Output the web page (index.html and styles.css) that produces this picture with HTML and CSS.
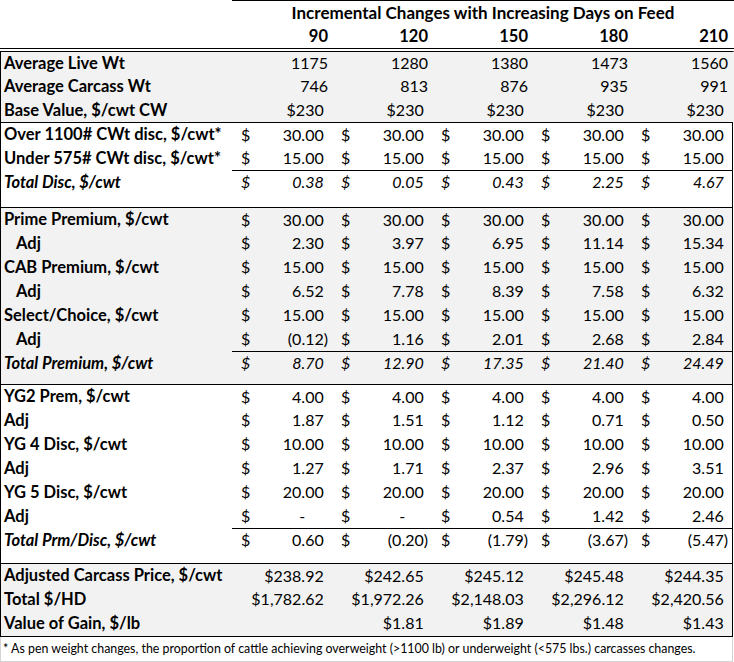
FILE: index.html
```html
<!DOCTYPE html>
<html lang="en">
<head>
<meta charset="utf-8">
<title>Incremental Changes with Increasing Days on Feed</title>
<link rel="stylesheet" href="styles.css">
</head>
<body>
<div class="sheet">
  <div class="head">
    <div class="title">Incremental Changes with Increasing Days on Feed</div>
    <div class="cols"><span>90</span><span>120</span><span>150</span><span>180</span><span>210</span></div>
  </div>
  <div class="body">
    <section class="sec s1 gray">
      <div class="row"><div class="lbl">Average Live Wt</div><span class="num wide">1175</span><span class="num wide">1280</span><span class="num wide">1380</span><span class="num wide">1473</span><span class="num wide">1560</span></div>
      <div class="row"><div class="lbl">Average Carcass Wt</div><span class="num wide">746</span><span class="num wide">813</span><span class="num wide">876</span><span class="num wide">935</span><span class="num wide">991</span></div>
      <div class="row"><div class="lbl">Base Value, $/cwt CW</div><span class="num wide p">$230</span><span class="num wide p">$230</span><span class="num wide p">$230</span><span class="num wide p">$230</span><span class="num wide p">$230</span></div>
    </section>
    <section class="sec">
      <div class="row"><div class="lbl">Over 1100# CWt disc, $/cwt*</div><span class="cur">$</span><span class="num p">30.00</span><span class="cur">$</span><span class="num p">30.00</span><span class="cur">$</span><span class="num p">30.00</span><span class="cur">$</span><span class="num p">30.00</span><span class="cur">$</span><span class="num p">30.00</span></div>
      <div class="row"><div class="lbl">Under 575# CWt disc, $/cwt*</div><span class="cur">$</span><span class="num p">15.00</span><span class="cur">$</span><span class="num p">15.00</span><span class="cur">$</span><span class="num p">15.00</span><span class="cur">$</span><span class="num p">15.00</span><span class="cur">$</span><span class="num p">15.00</span></div>
      <div class="row total it"><div class="lbl">Total Disc, $/cwt</div><span class="cur">$</span><span class="num p">0.38</span><span class="cur">$</span><span class="num p">0.05</span><span class="cur">$</span><span class="num p">0.43</span><span class="cur">$</span><span class="num p">2.25</span><span class="cur">$</span><span class="num p">4.67</span></div>
      <div class="spacer sp2"></div>
    </section>
    <section class="sec gray">
      <div class="row"><div class="lbl">Prime Premium, $/cwt</div><span class="cur">$</span><span class="num p">30.00</span><span class="cur">$</span><span class="num p">30.00</span><span class="cur">$</span><span class="num p">30.00</span><span class="cur">$</span><span class="num p">30.00</span><span class="cur">$</span><span class="num p">30.00</span></div>
      <div class="row"><div class="lbl ind">Adj</div><span class="cur">$</span><span class="num p">2.30</span><span class="cur">$</span><span class="num p">3.97</span><span class="cur">$</span><span class="num p">6.95</span><span class="cur">$</span><span class="num p">11.14</span><span class="cur">$</span><span class="num p">15.34</span></div>
      <div class="row"><div class="lbl">CAB Premium, $/cwt</div><span class="cur">$</span><span class="num p">15.00</span><span class="cur">$</span><span class="num p">15.00</span><span class="cur">$</span><span class="num p">15.00</span><span class="cur">$</span><span class="num p">15.00</span><span class="cur">$</span><span class="num p">15.00</span></div>
      <div class="row"><div class="lbl ind">Adj</div><span class="cur">$</span><span class="num p">6.52</span><span class="cur">$</span><span class="num p">7.78</span><span class="cur">$</span><span class="num p">8.39</span><span class="cur">$</span><span class="num p">7.58</span><span class="cur">$</span><span class="num p">6.32</span></div>
      <div class="row"><div class="lbl">Select/Choice, $/cwt</div><span class="cur">$</span><span class="num p">15.00</span><span class="cur">$</span><span class="num p">15.00</span><span class="cur">$</span><span class="num p">15.00</span><span class="cur">$</span><span class="num p">15.00</span><span class="cur">$</span><span class="num p">15.00</span></div>
      <div class="row"><div class="lbl ind">Adj</div><span class="cur">$</span><span class="num">(0.12)</span><span class="cur">$</span><span class="num p">1.16</span><span class="cur">$</span><span class="num p">2.01</span><span class="cur">$</span><span class="num p">2.68</span><span class="cur">$</span><span class="num p">2.84</span></div>
      <div class="row total it"><div class="lbl">Total Premium, $/cwt</div><span class="cur">$</span><span class="num p">8.70</span><span class="cur">$</span><span class="num p">12.90</span><span class="cur">$</span><span class="num p">17.35</span><span class="cur">$</span><span class="num p">21.40</span><span class="cur">$</span><span class="num p">24.49</span></div>
      <div class="spacer sp3"></div>
    </section>
    <section class="sec">
      <div class="row"><div class="lbl">YG2 Prem, $/cwt</div><span class="cur">$</span><span class="num p">4.00</span><span class="cur">$</span><span class="num p">4.00</span><span class="cur">$</span><span class="num p">4.00</span><span class="cur">$</span><span class="num p">4.00</span><span class="cur">$</span><span class="num p">4.00</span></div>
      <div class="row"><div class="lbl">Adj</div><span class="cur">$</span><span class="num p">1.87</span><span class="cur">$</span><span class="num p">1.51</span><span class="cur">$</span><span class="num p">1.12</span><span class="cur">$</span><span class="num p">0.71</span><span class="cur">$</span><span class="num p">0.50</span></div>
      <div class="row"><div class="lbl">YG 4 Disc, $/cwt</div><span class="cur">$</span><span class="num p">10.00</span><span class="cur">$</span><span class="num p">10.00</span><span class="cur">$</span><span class="num p">10.00</span><span class="cur">$</span><span class="num p">10.00</span><span class="cur">$</span><span class="num p">10.00</span></div>
      <div class="row"><div class="lbl">Adj</div><span class="cur">$</span><span class="num p">1.27</span><span class="cur">$</span><span class="num p">1.71</span><span class="cur">$</span><span class="num p">2.37</span><span class="cur">$</span><span class="num p">2.96</span><span class="cur">$</span><span class="num p">3.51</span></div>
      <div class="row"><div class="lbl">YG 5 Disc, $/cwt</div><span class="cur">$</span><span class="num p">20.00</span><span class="cur">$</span><span class="num p">20.00</span><span class="cur">$</span><span class="num p">20.00</span><span class="cur">$</span><span class="num p">20.00</span><span class="cur">$</span><span class="num p">20.00</span></div>
      <div class="row"><div class="lbl">Adj</div><span class="cur">$</span><span class="num dash">-</span><span class="cur">$</span><span class="num dash">-</span><span class="cur">$</span><span class="num p">0.54</span><span class="cur">$</span><span class="num p">1.42</span><span class="cur">$</span><span class="num p">2.46</span></div>
      <div class="row total"><div class="lbl lit">Total Prm/Disc, $/cwt</div><span class="cur">$</span><span class="num p">0.60</span><span class="cur">$</span><span class="num">(0.20)</span><span class="cur">$</span><span class="num">(1.79)</span><span class="cur">$</span><span class="num">(3.67)</span><span class="cur">$</span><span class="num">(5.47)</span></div>
      <div class="spacer sp4"></div>
    </section>
    <section class="sec gray last">
      <div class="row"><div class="lbl">Adjusted Carcass Price, $/cwt</div><span class="num wide p">$238.92</span><span class="num wide p">$242.65</span><span class="num wide p">$245.12</span><span class="num wide p">$245.48</span><span class="num wide p">$244.35</span></div>
      <div class="row"><div class="lbl">Total $/HD</div><span class="num wide p">$1,782.62</span><span class="num wide p">$1,972.26</span><span class="num wide p">$2,148.03</span><span class="num wide p">$2,296.12</span><span class="num wide p">$2,420.56</span></div>
      <div class="row"><div class="lbl">Value of Gain, $/lb</div><span class="num wide"></span><span class="num wide p">$1.81</span><span class="num wide p">$1.89</span><span class="num wide p">$1.48</span><span class="num wide p">$1.43</span></div>
    </section>
    <p class="note">* As pen weight changes, the proportion of cattle achieving overweight (&gt;1100 lb) or underweight (&lt;575 lbs.) carcasses changes.</p>
  </div>
</div>
</body>
</html>
```
FILE: styles.css
```css
* { box-sizing: border-box; }
html, body { margin: 0; padding: 0; background: #fff; }
body {
  font-family: Lato, "Liberation Sans", sans-serif;
  font-size: 16.5px;
  color: #000;
}
.sheet { width: 734px; }

.head {
  margin-left: 232px;
  width: 502px;
  border-top: 1px solid #000;
  font-weight: 700;
}
.title { height: 24px; line-height: 24px; text-align: center; font-size: 17px; }
.cols {
  display: grid;
  grid-template-columns: repeat(5, 100px);
  height: 23px;
  line-height: 23px;
}
.cols span { text-align: right; padding-right: 4px; }

.body {
  border-top: 1px solid #000;
  padding-top: 2px;
  width: 734px;
}
.sec {
  width: 733px;
  border-top: 1px solid #000;
  border-left: 1px solid #000;
  border-right: 1px solid #000;
}
.sec.s1 { border-right-color: transparent; width: 734px; }
.gray { background: #f2f2f2; }

.row {
  display: grid;
  grid-template-columns: 231px repeat(5, 32px 68px);
  height: 24px;
  line-height: 24px;
  white-space: nowrap;
}
.sec > .row:first-child { height: 23px; line-height: 23px; }
.s1 > .row:first-child { height: 22px; line-height: 22px; }
.s1 .row { grid-template-columns: 231px repeat(5, 32px 68px) 1px; }

.row.total {
  background: linear-gradient(#000, #000) no-repeat 231px 0 / calc(100% - 231px) 1px;
}
.lbl { font-weight: 700; padding-left: 3px; }
.lbl.ind { padding-left: 15px; }
.it .lbl, .lbl.lit { font-style: italic; }
.it .cur, .it .num { font-style: italic; }

.cur { padding-left: 9px; font-size: 16px; }
.num { text-align: right; padding-right: 4px; font-size: 16px; }
.num.wide { grid-column: span 2; }
.num.p::after { content: ")"; visibility: hidden; }
.num.dash::after { content: "00)"; visibility: hidden; }

.spacer.sp2 { height: 13px; }
.spacer.sp3 { height: 9px; }
.spacer.sp4 { height: 11px; }
.sec.last { border-bottom: 1px solid #000; padding-bottom: 1px; }

.note {
  margin: 0;
  width: 733px;
  height: 25px;
  border: 1px solid #d4d4d4;
  border-top: 0;
  padding-left: 2px;
  font-size: 12.4px;
  line-height: 24px;
  color: #000;
  white-space: nowrap;
}
```
